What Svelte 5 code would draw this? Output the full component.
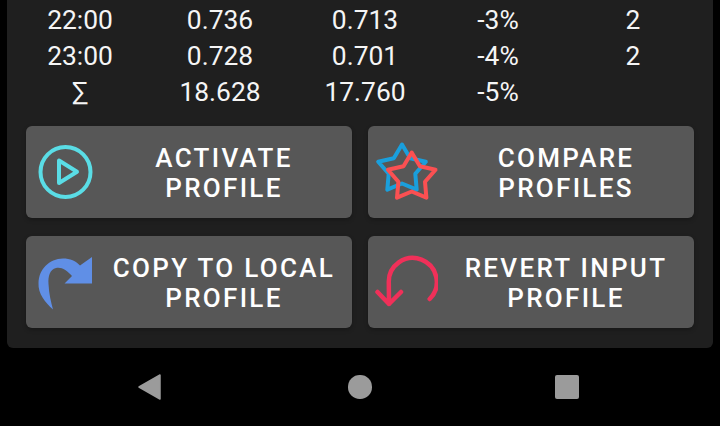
<script>
  const rows = [
    ['22:00', '0.736', '0.713', '-3%', '2'],
    ['23:00', '0.728', '0.701', '-4%', '2'],
    ['∑', '18.628', '17.760', '-5%', '']
  ]

  // five pointed star, first tip straight up
  function star(cx, cy, R, r) {
    const pts = []
    for (let i = 0; i < 10; i++) {
      const rad = i % 2 ? r : R
      const a = -Math.PI / 2 + (i * Math.PI) / 5
      pts.push((cx + rad * Math.cos(a)).toFixed(1) + ',' + (cy + rad * Math.sin(a)).toFixed(1))
    }
    return pts.join(' ')
  }
</script>

<div class="screen">
  <div class="panel">
    <div class="table">
      {#each rows as row}
        {#each row as cell}
          <div class="cell">{cell}</div>
        {/each}
      {/each}
    </div>

    <div class="buttons">
      <button>
        <svg viewBox="0 0 70 92" width="70" height="92">
          <circle cx="39.5" cy="46" r="25" fill="none" stroke="#5adde6" stroke-width="4" />
          <path d="M33 34.500V57L51 45.700Z" fill="none" stroke="#5adde6" stroke-width="4" stroke-linejoin="round" />
        </svg>
        <span>ACTIVATE<br />PROFILE</span>
      </button>

      <button>
        <svg viewBox="0 0 70 92" width="70" height="92">
          <polygon points={star(34, 43.5, 25, 14)} fill="none" stroke="#1a9fdc" stroke-width="4" stroke-linejoin="round" />
          <polygon points={star(43.7, 51.5, 25, 14)} fill="none" stroke="#fb5052" stroke-width="4" stroke-linejoin="round" />
        </svg>
        <span>COMPARE<br />PROFILES</span>
      </button>

      <button>
        <svg viewBox="0 0 70 92" width="70" height="92">
          <path
            d="M66 21V47.500H38.500L46 40C41 34 35 30.500 30 32C24 33.500 22 40 22.500 48C23 58 25 66 27 73.500C19 66 12 58 12.500 47C13 33 23 23 37 22.500C44 22.500 50 25 54 29.500Z"
            fill="#608fe6"
          />
        </svg>
        <span>COPY TO LOCAL<br />PROFILE</span>
      </button>

      <button>
        <svg viewBox="0 0 70 92" width="70" height="92">
          <path
            d="M61.700 63A24 24 0 1 0 20.800 47L21 68M9.500 56L21 68L33 56"
            fill="none"
            stroke="#f03059"
            stroke-width="4.500"
            stroke-linecap="round"
            stroke-linejoin="round"
          />
        </svg>
        <span>REVERT INPUT<br />PROFILE</span>
      </button>
    </div>
  </div>

  <nav>
    <svg class="back" viewBox="0 0 23 26" width="23" height="26">
      <path d="M22 1V25L1 13Z" fill="#9b9b9b" stroke="#9b9b9b" stroke-width="1.500" stroke-linejoin="round" />
    </svg>
    <div class="home"></div>
    <div class="recent"></div>
  </nav>
</div>

<style>
  :global(body) {
    background: #000;
  }

  .screen {
    width: 720px;
    height: 426px;
    overflow: hidden;
    background: #000;
    display: flex;
    flex-direction: column;
    font-family: Roboto, sans-serif;
  }

  .panel {
    height: 348px;
    box-sizing: border-box;
    margin: 0 7px;
    padding: 2px 19px 20px;
    background: #1f1f1f;
    border-radius: 0 0 6px 6px;
  }

  .table {
    display: grid;
    grid-template-columns: 108px 172px 118px 148px 122px;
    grid-auto-rows: 36px;
  }

  .cell {
    text-align: center;
    line-height: 36px;
    font-size: 26.4px;
    color: #f5f5f5;
  }

  .buttons {
    display: grid;
    grid-template-columns: 326px 326px;
    grid-auto-rows: 92px;
    gap: 18px 16px;
    margin-top: 16px;
  }

  button {
    display: flex;
    align-items: center;
    padding: 0;
    border: none;
    border-radius: 6px;
    background: #575757;
    box-shadow: 0 2px 4px rgba(0, 0, 0, 0.25);
    color: #fff;
    font-family: inherit;
    font-size: 26px;
    font-weight: 500;
    letter-spacing: 2.3px;
    line-height: 30px;
  }

  button svg {
    flex: none;
  }

  button span {
    flex: 1;
    padding-top: 1px;
    text-align: center;
  }

  nav {
    flex: 1;
    display: flex;
    align-items: center;
    padding-left: 138px;
  }

  .home {
    width: 23.4px;
    height: 23.4px;
    margin-left: 187.3px;
    border-radius: 50%;
    background: #9b9b9b;
  }

  .recent {
    width: 24px;
    height: 24px;
    margin-left: 183.3px;
    border-radius: 2px;
    background: #9b9b9b;
  }
</style>
